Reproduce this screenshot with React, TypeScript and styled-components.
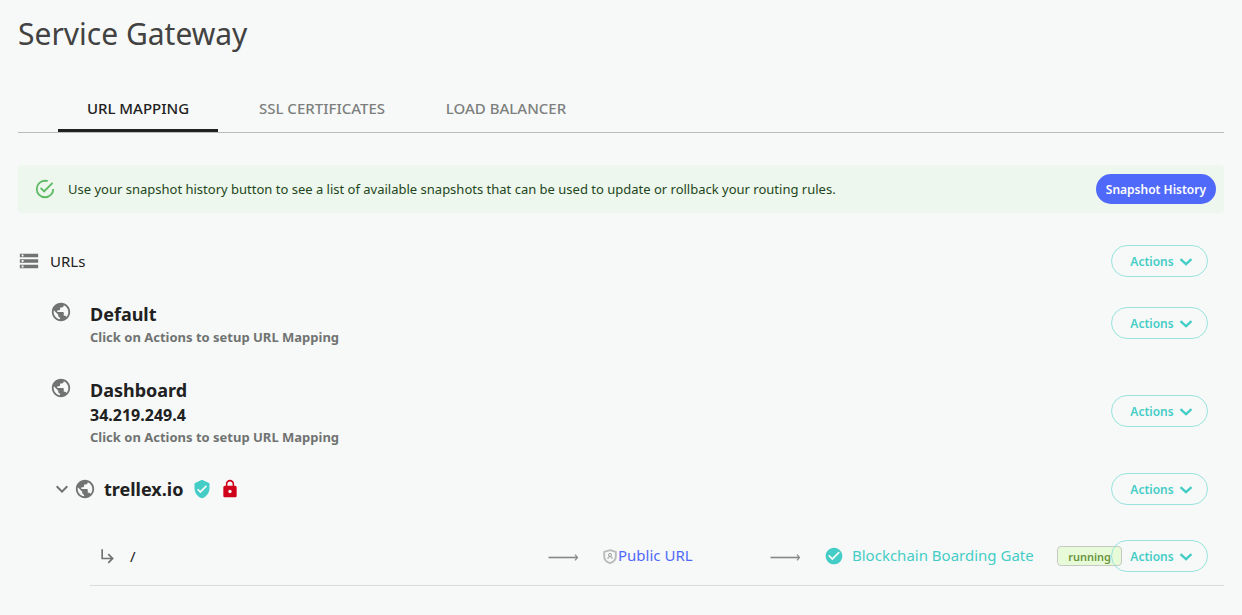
import React from "react";
import styled, { createGlobalStyle } from "styled-components";
import {
  MdStorage,
  MdPublic,
  MdVerifiedUser,
  MdLock,
  MdSubdirectoryArrowRight,
  MdExpandMore,
  MdCheckCircle,
} from "react-icons/md";

const GlobalStyle = createGlobalStyle`
  *, *::before, *::after { box-sizing: border-box; }
  body {
    margin: 0;
    background: #f7f9f8;
    color: #212121;
    font-family: "Segoe UI", "Noto Sans", "Open Sans", sans-serif;
    font-size: 14px;
    line-height: 20px;
  }
`;

const Page = styled.main`
  min-height: 100vh;
  padding: 12px 18px 28px;
`;

const Title = styled.h1`
  margin: 0 0 28px;
  font-size: 30px;
  line-height: 44px;
  font-weight: 400;
  color: #424242;
`;

const Tabs = styled.div`
  display: flex;
  gap: 24px;
  padding-left: 40px;
  border-bottom: 1px solid #b9bcbb;
`;

const Tab = styled.button<{ $active?: boolean }>`
  width: 160px;
  height: 48px;
  padding: 3px 0 0;
  border: 0;
  border-bottom: 3px solid ${(p) => (p.$active ? "#212121" : "transparent")};
  background: none;
  color: ${(p) => (p.$active ? "#212121" : "#7d7f7e")};
  font: inherit;
  font-size: 15px;
  font-weight: 500;
  cursor: pointer;
`;

const Alert = styled.div`
  display: flex;
  align-items: center;
  gap: 12px;
  height: 48px;
  margin: 32px 0;
  padding: 0 8px 0 16px;
  border-radius: 4px;
  background: #edf7ed;
  color: #1e4620;
  font-size: 13px;
`;

const AlertText = styled.p`
  flex: 1;
  margin: 0;
`;

const SnapshotButton = styled.button`
  height: 30px;
  padding: 1px 10px 0;
  border: 0;
  border-radius: 15px;
  background: #4f69fa;
  color: #fff;
  font: inherit;
  font-size: 12px;
  font-weight: 600;
  cursor: pointer;
`;

const ActionsButton = styled.button`
  display: flex;
  flex-shrink: 0;
  align-items: center;
  justify-content: center;
  gap: 5px;
  width: 97px;
  height: 32px;
  padding: 1px 0 0 4px;
  border: 1px solid #98e3dd;
  border-radius: 16px;
  background: none;
  color: #44cdc6;
  font: inherit;
  font-size: 12px;
  font-weight: 600;
  cursor: pointer;
`;

const Section = styled.section`
  display: flex;
  flex-direction: column;
`;

const SectionHeader = styled.header`
  display: flex;
  align-items: center;
  gap: 10px;
  padding-right: 16px;
  color: #707372;
`;

const SectionTitle = styled.h2`
  flex: 1;
  margin: 0;
  font-size: 15px;
  font-weight: 400;
  color: #212121;
`;

const HostList = styled.ul`
  display: flex;
  flex-direction: column;
  gap: 30px;
  margin: 23px 0 27px;
  padding: 0 16px 0 32px;
  list-style: none;
`;

const HostRow = styled.li`
  display: flex;
  align-items: center;
  gap: 18px;
`;

const HostIcon = styled.span`
  display: flex;
  align-self: flex-start;
  padding-top: 1px;
  color: #707372;
`;

const HostInfo = styled.div`
  flex: 1;
`;

const HostName = styled.h3`
  margin: 0;
  font-size: 18px;
  line-height: 28px;
  font-weight: 700;
`;

const HostAddress = styled.p`
  margin: 0;
  font-size: 16px;
  line-height: 22px;
  padding-bottom: 2px;
  font-weight: 700;
`;

const HostHint = styled.p`
  margin: 0;
  font-size: 13px;
  line-height: 18px;
  font-weight: 700;
  color: #707372;
`;

const DomainRow = styled.div`
  display: flex;
  align-items: center;
  padding: 0 16px 0 32px;
  color: #707372;
`;

const Toggle = styled.button`
  display: flex;
  padding: 0;
  border: 0;
  background: none;
  color: inherit;
  cursor: pointer;
`;

const DomainName = styled(HostName)`
  margin: 0 9px 0 8px;
  color: #212121;
`;

const DomainBadges = styled.span`
  display: flex;
  flex: 1;
  gap: 8px;
`;

const RouteRow = styled.div`
  display: grid;
  grid-template-columns: 458fr 55px 167fr 54px 384fr;
  align-items: center;
  margin: 35px 0 0 72px;
  padding: 0 16px 13px 0;
  border-bottom: 1px solid #d8dbda;
  font-size: 15px;
  color: #707372;
`;

const RouteCell = styled.div<{ $gap?: number; $indent?: number }>`
  display: flex;
  align-items: center;
  gap: ${(p) => p.$gap ?? 0}px;
  padding-left: ${(p) => p.$indent ?? 0}px;
`;

const PathText = styled.span`
  color: #212121;
`;

const RouteLink = styled.a<{ $accent?: boolean }>`
  padding-bottom: 2px;
  color: ${(p) => (p.$accent ? "#44cdc6" : "#4f69fa")};
  text-decoration: none;
  white-space: nowrap;
`;

const Status = styled.span`
  height: 20px;
  margin: 0 -11px 0 auto;
  padding: 0 10px;
  border: 1px solid #c6c9c3;
  border-radius: 4px;
  background: #e8fbd9;
  color: #6b9440;
  font-size: 11px;
  line-height: 20px;
  font-weight: 600;
`;

function SuccessIcon() {
  return (
    <svg width="22" height="22" viewBox="0 0 24 24" fill="#5fbb63" aria-hidden="true">
      <path d="M20,12A8,8 0 0,1 12,20A8,8 0 0,1 4,12A8,8 0 0,1 12,4C12.76,4 13.5,4.11 14.2,4.31L15.77,2.74C14.61,2.26 13.34,2 12,2A10,10 0 0,0 2,12A10,10 0 0,0 12,22A10,10 0 0,0 22,12M7.91,10.08L6.5,11.5L11,16L21,6L19.59,4.58L11,13.17L7.91,10.08Z" />
    </svg>
  );
}

function ChevronIcon() {
  return (
    <svg width="14" height="14" viewBox="0 0 14 14" fill="none" aria-hidden="true">
      <path d="M1.5 4.2 7 9.2 12.5 4.2" stroke="currentColor" strokeWidth="2.3" />
    </svg>
  );
}

function ArrowIcon() {
  return (
    <svg width="32" height="20" viewBox="0 0 32 20" fill="none" stroke="#858786" aria-hidden="true">
      <path d="M0.5 11.5H29" strokeWidth="1.6" />
      <path d="M27 8.7 29.5 11.5 27 14.3" strokeWidth="1.2" />
    </svg>
  );
}

function AccessIcon() {
  return (
    <svg width="15" height="18" viewBox="0 0 15 18" fill="none" stroke="#b8bbba" aria-hidden="true">
      <path
        d="M7 3.2 12.8 4.9V9.5C12.8 12.6 10.3 15 7 16.2 3.7 15 1.2 12.6 1.2 9.5V4.9Z"
        strokeWidth="1.9"
      />
      <circle cx="7" cy="7.9" r="1.5" stroke="#9da09f" />
      <path d="M5 12V10.9Q5 9.8 6 9.8H8Q9 9.8 9 10.9V12" stroke="#9da09f" />
    </svg>
  );
}

function Actions() {
  return (
    <ActionsButton type="button">
      Actions
      <ChevronIcon />
    </ActionsButton>
  );
}

const hosts = [
  { name: "Default", address: "" },
  { name: "Dashboard", address: "34.219.249.4" },
];

export default function App() {
  return (
    <>
      <GlobalStyle />
      <Page>
        <Title>Service Gateway</Title>
        <Tabs role="tablist">
          <Tab type="button" role="tab" aria-selected="true" $active>
            URL MAPPING
          </Tab>
          <Tab type="button" role="tab" aria-selected="false">
            SSL CERTIFICATES
          </Tab>
          <Tab type="button" role="tab" aria-selected="false">
            LOAD BALANCER
          </Tab>
        </Tabs>
        <Alert role="status">
          <SuccessIcon />
          <AlertText>
            Use your snapshot history button to see a list of available snapshots that can be used to
            update or rollback your routing rules.
          </AlertText>
          <SnapshotButton type="button">Snapshot History</SnapshotButton>
        </Alert>
        <Section>
          <SectionHeader>
            <MdStorage size={22} />
            <SectionTitle>URLs</SectionTitle>
            <Actions />
          </SectionHeader>
          <HostList>
            {hosts.map((host) => (
              <HostRow key={host.name}>
                <HostIcon>
                  <MdPublic size={22} />
                </HostIcon>
                <HostInfo>
                  <HostName>{host.name}</HostName>
                  {host.address && <HostAddress>{host.address}</HostAddress>}
                  <HostHint>Click on Actions to setup URL Mapping</HostHint>
                </HostInfo>
                <Actions />
              </HostRow>
            ))}
          </HostList>
          <DomainRow>
            <Toggle type="button" aria-label="Collapse trellex.io" aria-expanded="true">
              <MdExpandMore size={24} />
            </Toggle>
            <MdPublic size={22} />
            <DomainName>trellex.io</DomainName>
            <DomainBadges>
              <MdVerifiedUser size={20} color="#44cdc6" />
              <MdLock size={20} color="#d0021b" />
            </DomainBadges>
            <Actions />
          </DomainRow>
          <RouteRow>
            <RouteCell $gap={12} $indent={8}>
              <MdSubdirectoryArrowRight size={20} />
              <PathText>/</PathText>
            </RouteCell>
            <ArrowIcon />
            <RouteCell>
              <AccessIcon />
              <RouteLink href="#public-url">Public URL</RouteLink>
            </RouteCell>
            <ArrowIcon />
            <RouteCell>
              <RouteCell $gap={8}>
                <MdCheckCircle size={20} color="#44cdc6" />
                <RouteLink href="#gate" $accent>
                  Blockchain Boarding Gate
                </RouteLink>
              </RouteCell>
              <Status>running</Status>
              <Actions />
            </RouteCell>
          </RouteRow>
        </Section>
      </Page>
    </>
  );
}
